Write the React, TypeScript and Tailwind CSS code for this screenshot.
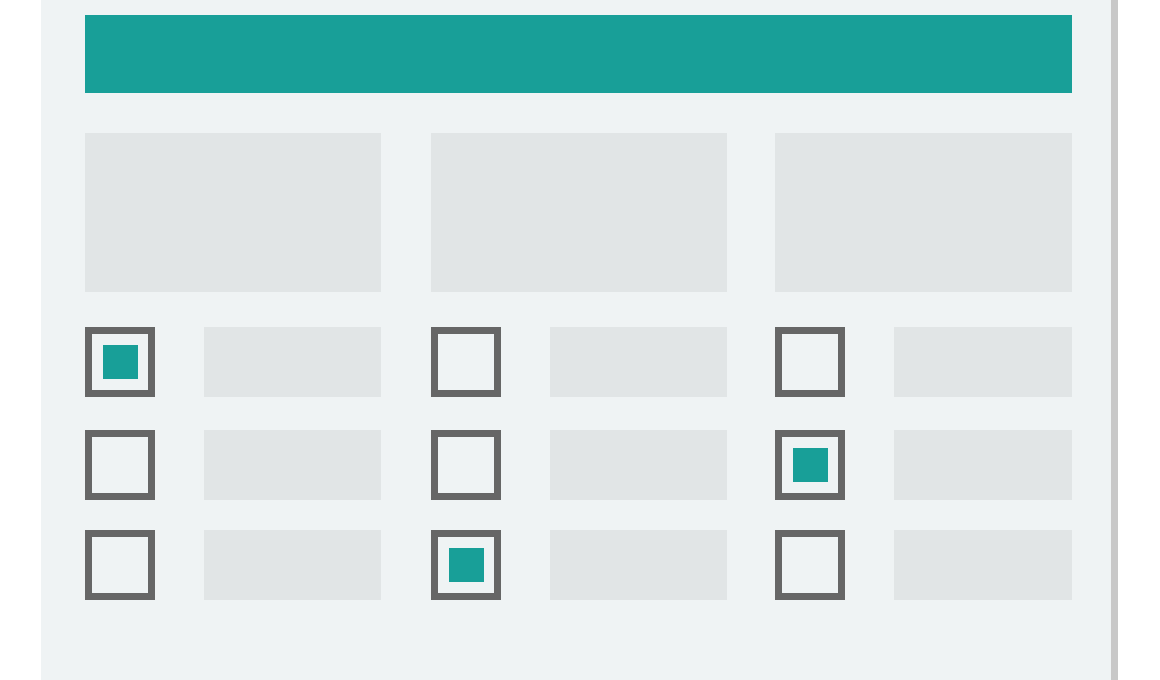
const rows = [
  [true, false, false],
  [false, false, true],
  [false, true, false],
]

// column widths and the gaps before them, measured from the mockup
const cols = ["w-[296px]", "ml-[50px] w-[296px]", "ml-[48px] w-[297px]"]
const rowGaps = ["mt-[35px]", "mt-[33px]", "mt-[30px]"]

function Checkbox({ checked }: { checked: boolean }) {
  return (
    <div className="flex h-[70px] w-[70px] shrink-0 items-center justify-center border-[7px] border-[#666666]">
      {checked && <div className="h-[34px] w-[35px] bg-[#189f98]" />}
    </div>
  )
}

export default function App() {
  return (
    <div className="h-[680px] w-[1160px] overflow-hidden bg-white">
      <div className="ml-[41px] flex h-[700px] w-[1077px]">
        <div className="w-[1070px] bg-[#eff3f4] pl-[44px] pr-[39px] pt-[15px]">
          <div className="h-[78px] w-full bg-[#189f98]" />

          <div className="mt-[40px] flex">
            {cols.map((c, i) => (
              <div key={i} className={`h-[159px] bg-[#e1e5e6] ${c}`} />
            ))}
          </div>

          {rows.map((row, i) => (
            <div key={i} className={`flex ${rowGaps[i]}`}>
              {row.map((checked, j) => (
                <div key={j} className={`flex items-center gap-x-[49px] ${cols[j]}`}>
                  <Checkbox checked={checked} />
                  <div className="h-[70px] flex-1 bg-[#e1e5e6]" />
                </div>
              ))}
            </div>
          ))}
        </div>
        <div className="w-[7px] bg-[#c8c8c8]" />
      </div>
    </div>
  )
}
